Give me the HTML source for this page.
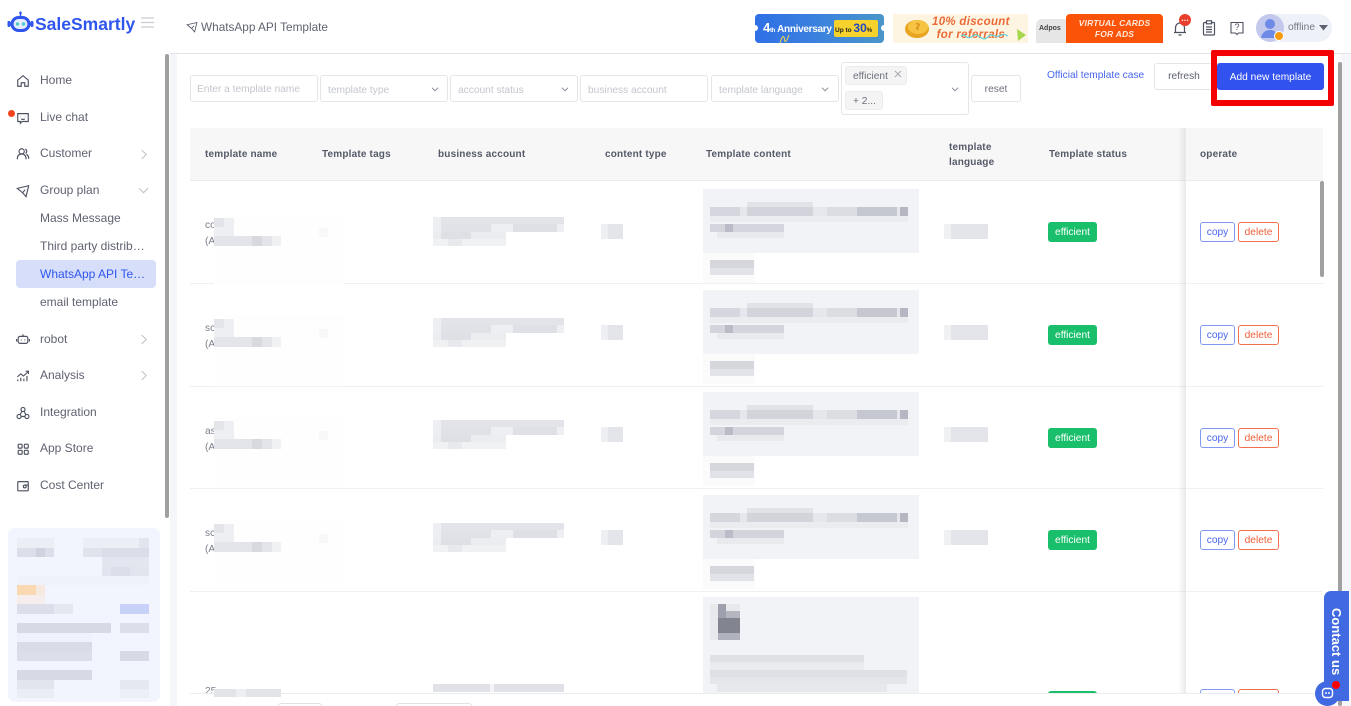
<!DOCTYPE html>
<html lang="en"><head><meta charset="utf-8"><title>WhatsApp API Template</title>
<style>
*{box-sizing:border-box}
html,body{margin:0;width:1351px;height:706px;overflow:hidden;background:#fff;font-family:"Liberation Sans",Arial,sans-serif;color:#606266}
#p{position:relative;width:1351px;height:706px;overflow:hidden}
.a{position:absolute;white-space:nowrap}
.nav{position:absolute;left:40px;font-size:12px;line-height:16px;color:#5f6270}
.ic{position:absolute;left:16px;width:14px;height:14px;margin-top:1px;fill:none;stroke:#4d5160;stroke-width:1.3}
.chev{position:absolute;left:139px;width:9px;height:9px;margin-top:1px;fill:none;stroke:#c0c3cc;stroke-width:1.2}
.box{position:absolute;background:#fff;border:1px solid #e4e6ea;border-radius:3px;font-size:10.2px;color:#c3c6cd;line-height:29px;padding-left:7px;height:27px;white-space:nowrap}
.dd{position:absolute;width:8px;height:8px;margin-top:1px;fill:none;stroke:#8a8e99;stroke-width:1.1}
.th{position:absolute;font-size:10px;font-weight:bold;letter-spacing:.18px;color:#555a68;line-height:15px;white-space:nowrap;margin-top:1px}
.tag{position:absolute;left:1048px;width:49px;height:20px;background:#19bf6b;border-radius:3px;color:#fff;font-size:10.2px;line-height:22px;text-align:center}
.copy,.del{position:absolute;height:20px;border-radius:3px;background:#fff;font-size:10.2px;line-height:19px;text-align:center}
.copy{left:1200px;width:35px;border:1px solid #8299f4;color:#4a66ee}
.del{left:1238px;width:41px;border:1px solid #f0714f;color:#ef5f3a}
.name{position:absolute;left:205px;font-size:10.2px;line-height:16px;color:#7b7f8b;margin-top:1px}
.line{position:absolute;left:190px;width:1133px;height:1px;background:#eff0f2}
</style></head><body><div id="p">

<!-- page backgrounds -->
<div class="a" style="left:170px;top:54px;width:1181px;height:652px;background:#f5f6f9"></div>
<div class="a" style="left:177px;top:54px;width:1160px;height:652px;background:#fff"></div>
<div class="a" style="left:170px;top:0;width:1181px;height:54px;background:#fff;border-bottom:1px solid #e3e4e7"></div>
<div class="a" style="left:1337px;top:54px;width:4px;height:652px;background:#fff"></div>

<!-- sidebar -->
<div class="a" style="left:0;top:0;width:170px;height:706px;background:#fff"></div>
<div class="a" style="left:165px;top:54px;width:4px;height:464px;background:#a0a0a0;border-radius:2px"></div>

<svg class="a" style="left:7px;top:11px" width="27" height="24" viewBox="0 0 27 24">
<path d="M13.5 1v4" stroke="#2f55ee" stroke-width="1.6"/><circle cx="13.5" cy="1.8" r="1.3" fill="#2f55ee"/>
<rect x="3.5" y="5" width="20" height="16" rx="8" fill="#2f55ee"/>
<rect x="0.5" y="10" width="3" height="6" rx="1.2" fill="#2f55ee"/><rect x="23.5" y="10" width="3" height="6" rx="1.2" fill="#2f55ee"/>
<rect x="6.5" y="8" width="14" height="10" rx="5" fill="#e5ecfd"/>
<circle cx="10.5" cy="13" r="1.7" fill="#4cc9c4"/><circle cx="16.5" cy="13" r="1.7" fill="#4cc9c4"/></svg>
<div class="a" style="left:35px;top:12px;font-size:17.5px;font-weight:bold;color:#2f55ee;line-height:24px">SaleSmartly</div>
<svg class="a" style="left:141px;top:17px" width="13" height="11" viewBox="0 0 13 11" stroke="#c9ccd2" stroke-width="1.2"><path d="M0 1h13M0 5.5h13M0 10h13"/></svg>

<svg class="ic" style="top:73px" viewBox="0 0 16 16"><path d="M2 7l6-5 6 5v7h-4v-4H6v4H2z"/></svg>
<div class="nav" style="top:72px">Home</div>
<div class="a" style="left:8px;top:110px;width:7px;height:7px;border-radius:50%;background:#f0441c"></div>
<svg class="ic" style="top:110px" viewBox="0 0 16 16"><path d="M2 3h12v9H7l-2 2v-2H2z"/><path d="M5.500 6.500v.5M10.500 6.500v.5M6 9c1 .8 3 .8 4 0"/></svg>
<div class="nav" style="top:109px">Live chat</div>
<svg class="ic" style="top:146px" viewBox="0 0 16 16"><circle cx="6.500" cy="5" r="3"/><path d="M1.500 14c0-4 2-6 5-6s5 2 5 6M10.500 2.500c2 .3 2.500 3.500.5 5M12 8.500c1.500.8 2.500 2.800 2.500 5"/></svg>
<div class="nav" style="top:145px">Customer</div>
<svg class="chev" style="top:149px" viewBox="0 0 10 10"><path d="M3 0l5 5-5 5"/></svg>
<svg class="ic" style="top:183px" viewBox="0 0 16 16"><path d="M1.500 5L14.500 2 11.500 14.500 7.500 10 1.500 5zM7.500 10l3-3.500"/></svg>
<div class="nav" style="top:182px">Group plan</div>
<svg class="chev" style="top:185px;left:138px;width:11px" viewBox="0 0 11 10"><path d="M.500 2.500l5 5 5-5"/></svg>
<div class="nav" style="top:210px">Mass Message</div>
<div class="nav" style="top:238px">Third party distrib…</div>
<div class="a" style="left:16px;top:260px;width:140px;height:28px;background:#d6def9;border-radius:4px"></div>
<div class="nav" style="top:266px;color:#2f55ee">WhatsApp API Te…</div>
<div class="nav" style="top:294px">email template</div>
<svg class="ic" style="top:331px" viewBox="0 0 16 16"><rect x="2.500" y="5" width="11" height="8" rx="2"/><path d="M8 5V2.500M.700 8v3M15.300 8v3M6 8.500v1M10 8.500v1"/></svg>
<div class="nav" style="top:331px">robot</div>
<svg class="chev" style="top:334px" viewBox="0 0 10 10"><path d="M3 0l5 5-5 5"/></svg>
<svg class="ic" style="top:368px" viewBox="0 0 16 16"><path d="M1.500 9l4-3.500 3 2.500 5.500-5M11 2.500h3.200v3M2 14v-2M5.500 14v-4M9 14v-3M12.500 14V8"/></svg>
<div class="nav" style="top:367px">Analysis</div>
<svg class="chev" style="top:370px" viewBox="0 0 10 10"><path d="M3 0l5 5-5 5"/></svg>
<svg class="ic" style="top:405px" viewBox="0 0 16 16"><circle cx="8" cy="4" r="2.300"/><circle cx="3.500" cy="12" r="2.300"/><circle cx="12.500" cy="12" r="2.300"/><path d="M6.800 6l-2.200 4M9.200 6l2.200 4M5.800 12h4.400"/></svg>
<div class="nav" style="top:404px">Integration</div>
<svg class="ic" style="top:441px" viewBox="0 0 16 16"><rect x="2.500" y="2.500" width="4.500" height="4.500" rx="1"/><rect x="9.500" y="2.500" width="4.500" height="4.500" rx="1"/><rect x="2.500" y="9.500" width="4.500" height="4.500" rx="1"/><rect x="9.500" y="9.500" width="4.500" height="4.500" rx="1"/></svg>
<div class="nav" style="top:440px">App Store</div>
<svg class="ic" style="top:478px" viewBox="0 0 16 16"><rect x="2" y="3" width="12" height="10.500" rx="1"/><circle cx="10" cy="8.500" r="1.600"/><path d="M10 6.900h4"/></svg>
<div class="nav" style="top:477px">Cost Center</div>

<!-- sidebar promo card -->
<div class="a" style="left:8px;top:528px;width:152px;height:174px;background:#f2f5fe;border-radius:7px"></div>
<svg class="a" style="left:0;top:510px" width="170" height="196" shape-rendering="crispEdges">
<rect x="17" y="28" width="37" height="10" fill="#eceef6"/><rect x="83" y="28" width="66" height="10" fill="#eceef6"/><rect x="139" y="28" width="10" height="10" fill="#e2e4ee"/>
<rect x="17" y="38" width="37" height="9" fill="#dcdee9"/><rect x="36" y="38" width="9" height="9" fill="#d0d2e0"/>
<rect x="83" y="38" width="66" height="9" fill="#e0e2ec"/><rect x="102" y="38" width="47" height="9" fill="#dbdde8"/>
<rect x="102" y="47" width="47" height="10" fill="#e4e6ef"/><rect x="102" y="57" width="47" height="9" fill="#e3e5ee"/><rect x="111" y="57" width="19" height="9" fill="#dcdee9"/>
<rect x="17" y="66" width="132" height="9" fill="#eff2fb"/>
<rect x="17" y="75" width="19" height="10" fill="#f8d9b2"/><rect x="36" y="75" width="9" height="10" fill="#f5e9e0"/>
<rect x="17" y="85" width="28" height="9" fill="#f5eeec"/>
<rect x="17" y="94" width="56" height="10" fill="#dcdee9"/><rect x="54" y="94" width="19" height="10" fill="#e6e8f1"/>
<rect x="120" y="94" width="29" height="10" fill="#c8d2f8"/>
<rect x="17" y="113" width="94" height="10" fill="#d7d9e5"/><rect x="120" y="113" width="29" height="10" fill="#dcdee9"/>
<rect x="17" y="123" width="75" height="9" fill="#eff1fb"/>
<rect x="17" y="132" width="75" height="9" fill="#d9dbe6"/>
<rect x="17" y="141" width="75" height="10" fill="#dcdee9"/><rect x="120" y="141" width="29" height="10" fill="#d7d9e5"/>
<rect x="17" y="160" width="75" height="10" fill="#d7d9e5"/>
<rect x="17" y="170" width="37" height="9" fill="#e3e5ee"/><rect x="120" y="170" width="29" height="9" fill="#e5e7f1"/>
<rect x="17" y="179" width="37" height="9" fill="#ebedf5"/><rect x="120" y="179" width="29" height="9" fill="#edeff7"/>
</svg>

<!-- header -->
<svg class="a" style="left:186px;top:21px;fill:none;stroke:#4d5160;stroke-width:1.100" width="12" height="12" viewBox="0 0 16 16"><path d="M1.500 5L14.500 2 11.500 14.500 7.500 10 1.500 5zM7.500 10l3-3.500"/></svg>
<div class="a" style="left:201px;top:19px;font-size:11.8px;line-height:16px;color:#606471">WhatsApp API Template</div>

<!-- banners -->
<div class="a" style="left:755px;top:14px;width:129px;height:29px;border-radius:4px;background:linear-gradient(90deg,#2f6fe6,#3d84dc 55%,#4a95c8)"></div>
<div class="a" style="left:752px;top:25px;width:6px;height:6px;border-radius:50%;background:#fff"></div>
<div class="a" style="left:881px;top:25px;width:6px;height:6px;border-radius:50%;background:#fff"></div>
<div class="a" style="left:763px;top:20px;font-size:10px;font-weight:bold;color:#fff;line-height:16px;letter-spacing:-.3px"><span style="font-size:13px">4</span><span style="font-size:6px">th</span> Anniversary</div>
<div class="a" style="left:834px;top:20px;width:44px;height:17px;background:#f7d22c;border-radius:2px;font-size:6.500px;font-weight:bold;line-height:17px;color:#222;padding-left:1px">Up to <span style="font-size:12px;color:#1d46c8">30</span><span style="font-size:6px">%</span></div>
<svg class="a" style="left:778px;top:34px" width="14" height="10" fill="none" stroke="#efd64a" stroke-width="1"><path d="M2 9c1-4 3-8 4-6s0 6 2 4 2-4 3-6"/></svg>

<div class="a" style="left:893px;top:14px;width:135px;height:29px;background:#fdf5e2"></div>
<svg class="a" style="left:904px;top:18px" width="26" height="20"><ellipse cx="13" cy="11" rx="12" ry="9" fill="#e9a522"/><ellipse cx="14" cy="9" rx="10" ry="7" fill="#f6c343"/><path d="M12 6c3-1 4 1 2 2.500s-2 3 1 2.500" stroke="#d68a18" fill="none" stroke-width="1.300"/></svg>
<div class="a" style="left:932px;top:16px;font-size:11.500px;line-height:12.500px;font-weight:bold;font-style:italic;color:#ea6a36;text-align:center;letter-spacing:.3px">10% discount<br>for referrals</div>
<svg class="a" style="left:960px;top:32px" width="50" height="8" fill="none" stroke="#66d4d8" stroke-width="1.300"><path d="M1 4c4-4 5 4 10 1s5-3 9 0 6 2 9-1 6 2 10 0 6-2 9 0"/></svg>
<svg class="a" style="left:1016px;top:29px" width="11" height="12"><path d="M1 0l9 6-8 6z" fill="#a5d84d"/></svg>

<div class="a" style="left:1036px;top:19px;width:32px;height:24px;background:#e6e6e6;border-radius:6px 0 0 0;font-size:7px;font-weight:bold;color:#444;padding:6px 0 0 3px;line-height:8px">Adpos</div>
<div class="a" style="left:1066px;top:14px;width:97px;height:29px;background:#fb5408;border-radius:4px 4px 0 0;color:#ffe9dc;font-size:8.500px;font-weight:bold;font-style:italic;text-align:center;line-height:10.500px;padding-top:4px;letter-spacing:.2px">VIRTUAL CARDS<br>FOR ADS</div>

<svg class="a" style="left:1172px;top:20px;fill:none;stroke:#4d5160;stroke-width:1.200" width="16" height="17" viewBox="0 0 16 17"><path d="M2 12.500h12M3.500 12.500V8c0-3 2-5 4.500-5s4.500 2 4.500 5v4.500M6.500 15h3"/></svg>
<div class="a" style="left:1179px;top:14px;width:12px;height:12px;border-radius:50%;background:#e8402c;color:#fff;font-size:8px;font-weight:bold;line-height:9px;text-align:center">…</div>
<svg class="a" style="left:1202px;top:20px;fill:none;stroke:#4d5160;stroke-width:1.200" width="14" height="16" viewBox="0 0 14 16"><rect x="1.500" y="2.500" width="11" height="12.500" rx="1"/><rect x="4.500" y=".8" width="5" height="3" fill="#fff"/><path d="M4 7h6M4 9.500h6M4 12h6"/></svg>
<svg class="a" style="left:1230px;top:21px;fill:none;stroke:#4d5160;stroke-width:1.100" width="14" height="15" viewBox="0 0 14 15"><path d="M1 1.500h12v10.500H8.500L7 13.500 5.500 12H1z"/></svg>
<div class="a" style="left:1230px;top:21px;width:14px;text-align:center;font-size:9px;line-height:13px;color:#4d5160">?</div>
<div class="a" style="left:1256px;top:14px;width:76px;height:28px;background:#eef1f8;border-radius:14px"></div>
<div class="a" style="left:1256px;top:14px;width:28px;height:28px;background:#c3c9ec;border-radius:50%"></div>
<svg class="a" style="left:1256px;top:14px" width="28" height="28"><circle cx="14" cy="10" r="5" fill="#6d8ae6"/><path d="M5 24c1-6 5-8 9-8s7 2 8 8z" fill="#6d8ae6"/></svg>
<div class="a" style="left:1274px;top:31px;width:10px;height:10px;background:#f79a0e;border:1px solid #fff;border-radius:50%"></div>
<div class="a" style="left:1288px;top:20px;font-size:10.200px;line-height:16px;color:#757985">offline</div>
<svg class="a" style="left:1319px;top:25px" width="9" height="6"><path d="M0 0h9L4.500 5.500z" fill="#5f6270"/></svg>

<!-- filters -->
<div class="box" style="left:190px;top:75px;width:128px;line-height:27px;padding-left:6px">Enter a template name</div>
<div class="box" style="left:320px;top:75px;width:128px">template type</div><svg class="dd" style="left:431px;top:84px" viewBox="0 0 9 9"><path d="M1 3l3.500 3.500L8 3"/></svg>
<div class="box" style="left:450px;top:75px;width:128px">account status</div><svg class="dd" style="left:561px;top:84px" viewBox="0 0 9 9"><path d="M1 3l3.500 3.500L8 3"/></svg>
<div class="box" style="left:580px;top:75px;width:128px">business account</div>
<div class="box" style="left:711px;top:75px;width:128px">template language</div><svg class="dd" style="left:821px;top:84px" viewBox="0 0 9 9"><path d="M1 3l3.500 3.500L8 3"/></svg>
<div class="box" style="left:841px;top:62px;width:128px;height:53px"></div>
<div class="a" style="left:845px;top:66px;width:62px;height:19px;background:#f4f4f5;border:1px solid #ececee;border-radius:3px;font-size:10.200px;line-height:20px;padding-left:7px;color:#6d717c">efficient</div>
<svg class="a" style="left:894px;top:70px;stroke:#a5a8b0;stroke-width:1" width="8" height="8"><path d="M1 1l6 6M7 1L1 7"/></svg>
<div class="a" style="left:845px;top:91px;width:38px;height:19px;background:#f4f4f5;border:1px solid #ececee;border-radius:3px;font-size:10.200px;line-height:19px;padding-left:7px;color:#6d717c">+ 2...</div>
<svg class="dd" style="left:951px;top:84px" viewBox="0 0 9 9"><path d="M1 3l3.500 3.500L8 3"/></svg>
<div class="box" style="left:971px;top:75px;width:50px;text-align:center;padding:0;color:#6d717c;line-height:28px">reset</div>
<div class="a" style="left:1047px;top:69px;font-size:10.200px;line-height:14px;color:#4765ee">Official template case</div>
<div class="box" style="left:1154px;top:63px;width:66px;text-align:center;padding:0 6px 0 0;color:#5f6270;line-height:25px">refresh</div>
<div class="a" style="left:1217px;top:63px;width:107px;height:27px;background:#3152ee;border-radius:3px;color:#fff;font-size:10.200px;line-height:29px;text-align:center">Add new template</div>
<div class="a" style="left:1211px;top:50px;width:123px;height:56px;border:6px solid #f40000;border-radius:2px"></div>

<!-- table -->
<div class="a" style="left:190px;top:128px;width:1133px;height:53px;background:#f7f7f8;border-bottom:1px solid #ececee"></div>
<div class="th" style="left:205px;top:146px">template name</div>
<div class="th" style="left:322px;top:146px">Template tags</div>
<div class="th" style="left:438px;top:146px">business account</div>
<div class="th" style="left:605px;top:146px">content type</div>
<div class="th" style="left:706px;top:146px">Template content</div>
<div class="th" style="left:949px;top:139px">template<br>language</div>
<div class="th" style="left:1049px;top:146px">Template status</div>
<div class="th" style="left:1200px;top:146px">operate</div>

<div class="line" style="top:283px"></div>
<div class="line" style="top:386px"></div>
<div class="line" style="top:488px"></div>
<div class="line" style="top:591px"></div>

<svg width="0" height="0" style="position:absolute"><defs>
<g id="m" shape-rendering="crispEdges">
<rect x="214" y="33" width="130" height="70" fill="#fefefe"/>
<rect x="214" y="37" width="20" height="18" fill="#eeeff2"/><rect x="214" y="37" width="10" height="9" fill="#e4e5ea"/>
<rect x="214" y="55" width="67" height="10" fill="#e4e5ea"/><rect x="252" y="55" width="10" height="10" fill="#d8d9df"/><rect x="272" y="55" width="9" height="10" fill="#f0f1f3"/>
<rect x="319" y="47" width="9" height="9" fill="#f8f8f9"/>
<rect x="433" y="36" width="131" height="7" fill="#eeeff2"/><rect x="441" y="36" width="123" height="7" fill="#e3e4e9"/>
<rect x="433" y="43" width="131" height="8" fill="#eeeff2"/><rect x="441" y="43" width="50" height="8" fill="#e1e2e7"/><rect x="513" y="43" width="44" height="8" fill="#dfe0e6"/>
<rect x="433" y="51" width="73" height="7" fill="#ecedf0"/><rect x="441" y="51" width="30" height="7" fill="#dfe0e6"/>
<rect x="433" y="58" width="73" height="7" fill="#f0f1f3"/><rect x="448" y="58" width="14" height="7" fill="#e8e9ed"/>
<rect x="601" y="43" width="22" height="15" fill="#e4e5ea"/><rect x="601" y="43" width="7" height="15" fill="#eeeff2"/>
<rect x="703" y="8" width="216" height="64" fill="#f2f3f7"/>
<rect x="710" y="26" width="198" height="9" fill="#e6e7ec"/>
<rect x="710" y="26" width="30" height="9" fill="#d6d7de"/><rect x="747" y="21" width="66" height="14" fill="#d2d3db"/><rect x="747" y="21" width="66" height="5" fill="#e2e3e9"/><rect x="827" y="26" width="30" height="9" fill="#dcdde3"/><rect x="857" y="26" width="40" height="9" fill="#c6c8d1"/><rect x="900" y="26" width="8" height="9" fill="#b4b6c1"/>
<rect x="710" y="35" width="198" height="6" fill="#ebecf0"/>
<rect x="710" y="43" width="74" height="8" fill="#d3d4dc"/><rect x="725" y="43" width="8" height="8" fill="#b9bbc6"/>
<rect x="717" y="51" width="67" height="6" fill="#e9eaee"/>
<rect x="703" y="72" width="52" height="30" fill="#fbfbfc"/>
<rect x="710" y="79" width="44" height="8" fill="#d6d7dd"/><rect x="710" y="87" width="44" height="7" fill="#e2e3e8"/>
<rect x="944" y="43" width="44" height="15" fill="#e4e5ea"/><rect x="944" y="43" width="7" height="15" fill="#f0f1f3"/>
</g></defs></svg>

<div class="name" style="top:217px">co<br>(A</div>
<div class="tag" style="top:222px">efficient</div><div class="copy" style="top:222px">copy</div><div class="del" style="top:222px">delete</div>
<svg class="a" style="left:0;top:181px" width="1000" height="104"><use href="#m"/></svg>

<div class="name" style="top:320px">sc<br>(A</div>
<div class="tag" style="top:325px">efficient</div><div class="copy" style="top:325px">copy</div><div class="del" style="top:325px">delete</div>
<svg class="a" style="left:0;top:282px" width="1000" height="106"><use href="#m"/></svg>

<div class="name" style="top:423px">as<br>(A</div>
<div class="tag" style="top:428px">efficient</div><div class="copy" style="top:428px">copy</div><div class="del" style="top:428px">delete</div>
<svg class="a" style="left:0;top:384px" width="1000" height="106"><use href="#m"/></svg>

<div class="name" style="top:525px">sc<br>(A</div>
<div class="tag" style="top:530px">efficient</div><div class="copy" style="top:530px">copy</div><div class="del" style="top:530px">delete</div>
<svg class="a" style="left:0;top:487px" width="1000" height="106"><use href="#m"/></svg>

<!-- fifth row, clipped at 693 -->
<div class="a" style="left:190px;top:592px;width:1133px;height:101px;overflow:hidden">
<div class="name" style="left:15px;top:91px">25</div>
<div class="tag" style="left:858px;top:99px">efficient</div><div class="copy" style="left:1010px;top:97px">copy</div><div class="del" style="left:1048px;top:97px">delete</div>
</div>
<div class="a" style="left:190px;top:693px;width:1133px;height:1px;background:#ecedf0"></div>
<svg class="a" style="left:0;top:592px" width="1000" height="106" shape-rendering="crispEdges">
<rect x="214" y="97" width="67" height="8" fill="#e3e4e9"/><rect x="236" y="97" width="10" height="8" fill="#eeeff2"/>
<rect x="433" y="92" width="131" height="8" fill="#e1e2e7"/><rect x="490" y="92" width="4" height="8" fill="#f5f5f7"/>
<rect x="703" y="5" width="216" height="96" fill="#f2f3f7"/>
<rect x="710" y="12" width="30" height="36" fill="#e8e9ed"/><rect x="718" y="12" width="8" height="14" fill="#9ea1ad"/><rect x="726" y="19" width="14" height="7" fill="#b3b5bf"/><rect x="718" y="26" width="22" height="15" fill="#82858f"/><rect x="718" y="41" width="22" height="7" fill="#b0b2bd"/>
<rect x="710" y="63" width="154" height="7" fill="#e0e1e7"/>
<rect x="710" y="70" width="154" height="8" fill="#eaebef"/>
<rect x="710" y="78" width="197" height="7" fill="#dfe0e6"/>
<rect x="710" y="85" width="197" height="7" fill="#e5e6eb"/>
<rect x="717" y="92" width="170" height="8" fill="#e7e8ec"/>
</svg>

<!-- frozen column shadow -->
<div class="a" style="left:1178px;top:128px;width:7px;height:565px;background:linear-gradient(90deg,rgba(0,0,0,0),rgba(0,0,0,.07))"></div>
<div class="a" style="left:1185px;top:128px;width:1px;height:565px;background:#e9e9ec"></div>
<div class="a" style="left:1320px;top:181px;width:4px;height:96px;background:#a0a0a0;border-radius:2px"></div>
<div class="a" style="left:1338px;top:62px;width:4px;height:644px;background:#a0a0a0;border-radius:2px"></div>

<!-- pagination tops -->
<div class="a" style="left:278px;top:703px;width:44px;height:3px;border:1px solid #e0e2e6;border-bottom:0;border-radius:3px 3px 0 0;background:#fff"></div>
<div class="a" style="left:396px;top:703px;width:76px;height:3px;border:1px solid #e0e2e6;border-bottom:0;border-radius:3px 3px 0 0;background:#fff"></div>

<!-- contact widget -->
<div class="a" style="left:1324px;top:591px;width:25px;height:110px;background:#4169e1;border-radius:7px 0 0 7px"></div>
<div class="a" style="left:1328px;top:608px;width:16px;height:70px;writing-mode:vertical-rl;color:#fff;font-size:13px;font-weight:bold;line-height:16px">Contact us</div>
<div class="a" style="left:1315px;top:681px;width:25px;height:25px;background:#4169e1;border-radius:50%"></div>
<svg class="a" style="left:1321px;top:687px;fill:none;stroke:#fff;stroke-width:1.400" width="13" height="13"><rect x="1.500" y="1.500" width="10" height="9" rx="3"/><path d="M5 5v2M8 5v2"/></svg>
<div class="a" style="left:1332px;top:681px;width:8px;height:8px;background:#f00;border-radius:50%"></div>
</div></body></html>
